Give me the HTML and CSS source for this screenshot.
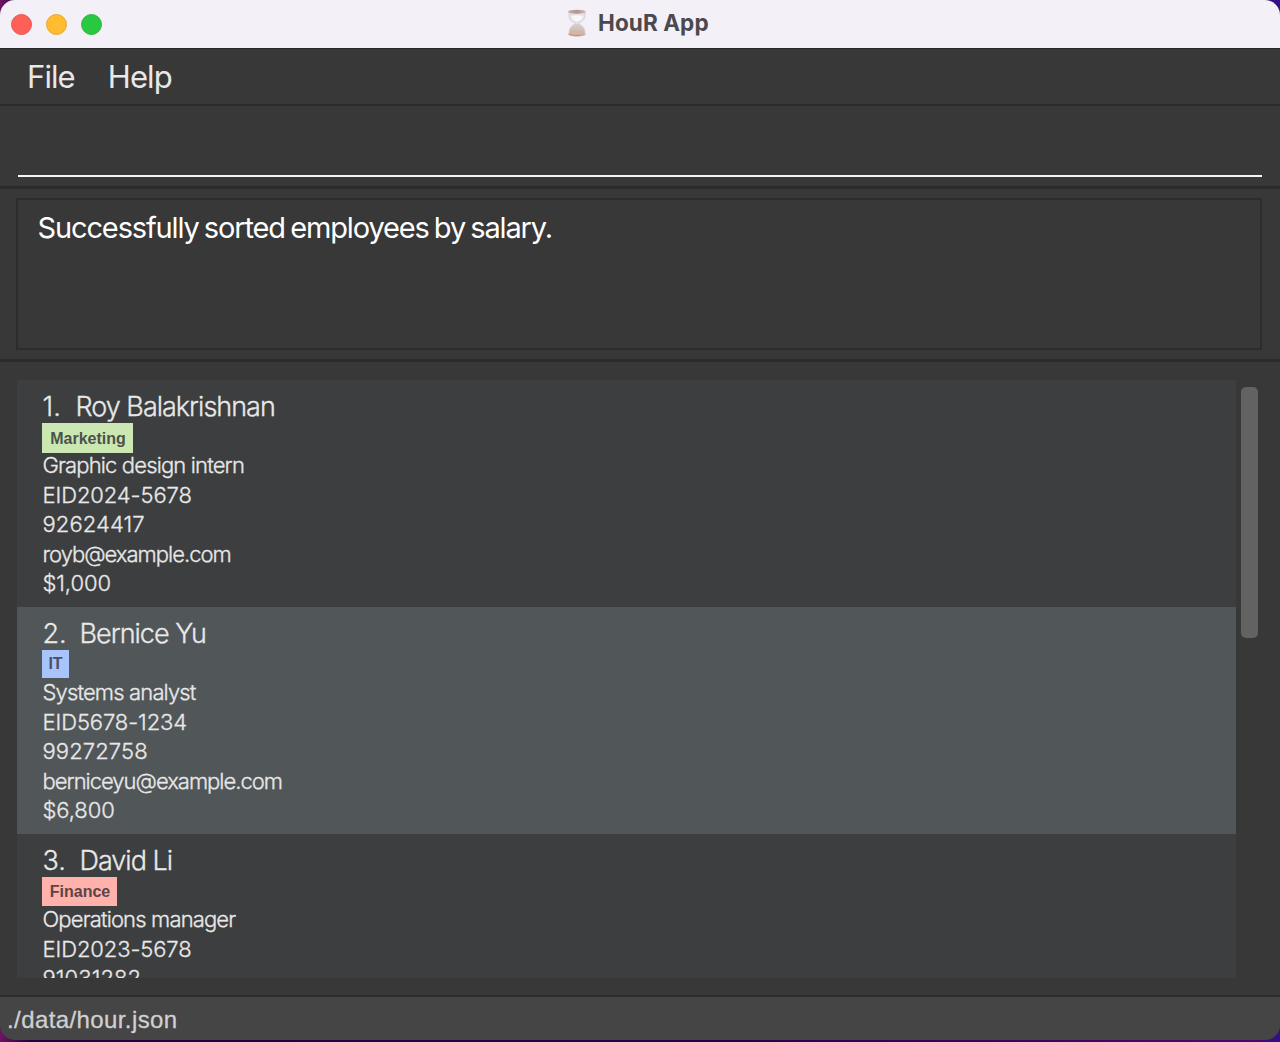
FILE: index.html
```html
<!DOCTYPE html>
<html lang="en">
<head>
<meta charset="utf-8">
<title>HouR App</title>
<link rel="stylesheet" href="styles.css">
</head>
<body>
<div class="window">
  <header class="titlebar">
    <div class="lights">
      <span class="light close"></span>
      <span class="light minimize"></span>
      <span class="light maximize"></span>
    </div>
    <svg class="hourglass" width="20" height="28" viewBox="0 0 20 28">
      <defs>
        <linearGradient id="cap" x1="0" x2="1" y1="0" y2="0">
          <stop offset="0" stop-color="#c9a9a2"/><stop offset=".5" stop-color="#b3958f"/><stop offset="1" stop-color="#d2bab5"/>
        </linearGradient>
        <linearGradient id="sand" x1="0" x2="0" y1="0" y2="1">
          <stop offset="0" stop-color="#d6d0d1"/><stop offset="1" stop-color="#d3b3a6"/>
        </linearGradient>
      </defs>
      <path d="M2 4C1.500 10 4 12.500 8 13.500v1.500C5 16 2 19 2 24h16c0-5-3-8-6-9v-1.500C16 12.500 18.500 10 18 4Z" fill="#e6e1e7" stroke="#d3cdd4" stroke-width=".8"/>
      <path d="M4 7q6-1.500 12 0-.5 4.500-6 5.500-5.500-1-6-5.500Z" fill="#f8f7fa"/>
      <path d="M8.500 15h3C15 16.500 17.500 19.500 17.800 24H2.200C2.500 19.500 5 16.500 8.500 15Z" fill="url(#sand)"/>
      <ellipse cx="10" cy="2.700" rx="9" ry="2" fill="url(#cap)"/>
      <ellipse cx="10" cy="25.200" rx="9" ry="2.200" fill="url(#cap)"/>
      <ellipse cx="10" cy="24" rx="7" ry="1.700" fill="#d8b5a5"/>
    </svg>
    <h1 class="title">HouR App</h1>
  </header>
  <nav class="menubar"><span class="menu">File</span><span class="menu help">Help</span></nav>
  <section class="command"><div class="command-input"></div></section>
  <section class="result"><div class="result-box">Successfully sorted employees by salary.</div></section>
  <main class="content">
    <div class="list">
      <article class="card">
        <h2 class="name"><span class="index one">1.</span>Roy Balakrishnan</h2>
        <div class="tags"><span class="tag marketing">Marketing</span></div>
        <p class="words">Graphic design intern</p><p>EID2024-5678</p><p class="phone">92624417</p><p class="email">royb@example.com</p><p>$1,000</p>
      </article>
      <article class="card alt">
        <h2 class="name"><span class="index">2.</span>Bernice Yu</h2>
        <div class="tags"><span class="tag it">IT</span></div>
        <p class="words">Systems analyst</p><p>EID5678-1234</p><p class="phone">99272758</p><p class="email">berniceyu@example.com</p><p>$6,800</p>
      </article>
      <article class="card">
        <h2 class="name"><span class="index">3.</span>David Li</h2>
        <div class="tags"><span class="tag finance">Finance</span></div>
        <p class="words">Operations manager</p><p>EID2023-5678</p><p class="phone">91031282</p>
      </article>
    </div>
    <div class="scrollbar"><div class="thumb"></div></div>
  </main>
  <footer class="status">./data/hour.json</footer>
</div>
</body>
</html>
```
FILE: styles.css
```css
* { box-sizing: border-box; }
body {
  margin: 0;
  height: 1042px;
  overflow: hidden;
  background: linear-gradient(90deg, #6d1464 0, #200040 30px, #250046 700px, #4b086f 1250px, #30108a 100%);
  font-family: Inter, "Liberation Sans", sans-serif;
  color: #e8e8e8;
}
.window {
  display: flex;
  flex-direction: column;
  width: 1280px;
  height: 1040px;
  border-radius: 15px;
  overflow: hidden;
  background: #383838;
}
.titlebar {
  display: flex;
  align-items: center;
  height: 49px;
  padding: 0 11px 2px;
  background: #f3f0f7;
  border-bottom: 1px solid #252626;
}
.lights { display: flex; gap: 14px; width: 556px; padding-top: 2px; }
.light { width: 21px; height: 21px; border-radius: 50%; }
.close { background: #fe5f57; border: 1px solid #e9534e; }
.minimize { background: #febc2e; border: 1px solid #e3a736; }
.maximize { background: #28c840; border: 1px solid #2fb541; }
.hourglass { flex: none; }
.title { margin: 0 0 0 11px; font-size: 22.500px; font-weight: 700; line-height: 28px; color: #4b494d; letter-spacing: .1px; }
.menubar {
  display: flex;
  gap: 33px;
  height: 57px;
  padding: 8px 27px 0;
  border-bottom: 2px solid #2b2b2b;
  font-size: 31px;
  line-height: 40px;
  letter-spacing: -.9px;
}
.command { height: 83px; padding: 0 18px 9px; border-bottom: 3px solid #2b2b2b; }
.command-input { height: 71px; border-bottom: 2px solid #f5f3f6; }
.result { height: 173px; padding: 9px 18px 9px 16px; border-bottom: 3px solid #2b2b2b; }
.result-box {
  height: 152px;
  padding: 10px 19.500px;
  border: 2px solid #2c2c2c;
  font-size: 29px;
  line-height: 36px;
  letter-spacing: -1.130px;
  word-spacing: -1.900px;
  color: #fff;
}
.content { display: flex; flex: 1; gap: 5px; min-height: 0; padding: 18px 21px 17px 17px; }
.list { width: 1219px; overflow: hidden; background: #3c3e3f; }
.card { height: 227px; padding: 9px 25.500px 0; background: #3c3e3f; -webkit-text-stroke: .3px #e8e8e8; }
.alt { background: #515658; }
.name { display: flex; margin: 0; height: 34px; font-size: 27px; font-weight: 300; line-height: 35px; letter-spacing: -1px; white-space: pre; }
.index { width: 37px; letter-spacing: 0; }
.one { width: 33px; }
.tags { display: flex; align-items: flex-start; height: 28.400px; margin-left: -.5px; -webkit-text-stroke: 0; }
.tag { flex: none; padding-left: 1px; font: bold 16px/29px "Liberation Sans", Arial, sans-serif; color: #4b524b; text-align: center; }
.marketing { width: 91px; height: 30px; line-height: 31px; background: #cbe8b3; }
.it { width: 27px; height: 28px; padding-left: 0; line-height: 28px; background: #a9c3fb; color: #485064; }
.finance { width: 75px; height: 29px; background: #ffb1ac; color: #5b4544; }
.card p { margin: 0; font-size: 22px; font-weight: 300; line-height: 29.400px; letter-spacing: -.1px; }
.card .phone { letter-spacing: .1px; }
.card .words { letter-spacing: -.85px; }
.card .email { letter-spacing: -1px; }
.scrollbar { width: 17px; padding-top: 7px; }
.thumb { height: 251px; border-radius: 5px; background: #626262; }
.status {
  height: 45px;
  padding: 3px 7px;
  border-top: 2px solid #2b2b2b;
  background: #454545;
  font: 24px/40px "Liberation Sans", Arial, sans-serif;
  letter-spacing: .4px;
  -webkit-text-stroke: .3px #d0d0d0;
  color: #d0d0d0;
}
```
